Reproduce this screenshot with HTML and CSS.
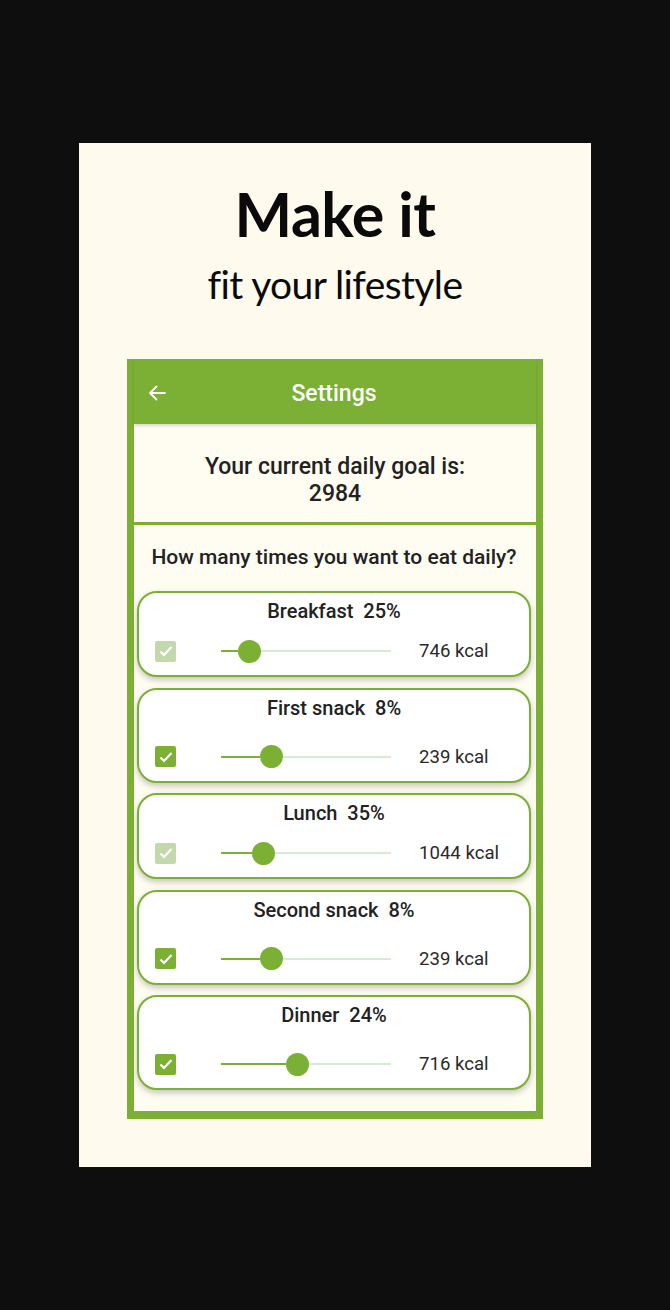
FILE: index.html
```html
<!DOCTYPE html>
<html>
<head>
<meta charset="utf-8">
<link rel="stylesheet" href="styles.css">
</head>
<body>
<div class="panel">
  <h1 class="headline">Make it</h1>
  <p class="subline">fit your lifestyle</p>
  <div class="phone">
    <div class="appbar">
      <svg class="back" width="18" height="16" viewBox="0 0 18 16"><path d="M17 8H2M8.5 1.5L2 8l6.5 6.5" fill="none" stroke="#fff" stroke-width="1.8" stroke-linecap="round" stroke-linejoin="round"/></svg>
      <span class="appbar-title">Settings</span>
    </div>
    <div class="goal">
      <div>Your current daily goal is:</div>
      <div>2984</div>
    </div>
    <div class="meals">
      <div class="question">How many times you want to eat daily?</div>

      <div class="card">
        <div class="card-title">Breakfast&nbsp; 25%</div>
        <div class="row">
          <span class="check faded"><svg width="14" height="12" viewBox="0 0 14 12"><path d="M1.5 6.5l3.5 3.5 7.5-8" fill="none" stroke="#fff" stroke-width="2.2"/></svg></span>
          <div class="slider"><span class="fill" style="width:17px"></span><span class="thumb"></span><span class="rest"></span></div>
          <span class="kcal">746 kcal</span>
        </div>
      </div>

      <div class="card tall">
        <div class="card-title">First snack&nbsp; 8%</div>
        <div class="row">
          <span class="check"><svg width="14" height="12" viewBox="0 0 14 12"><path d="M1.5 6.5l3.5 3.5 7.5-8" fill="none" stroke="#fff" stroke-width="2.2"/></svg></span>
          <div class="slider"><span class="fill" style="width:39px"></span><span class="thumb"></span><span class="rest"></span></div>
          <span class="kcal">239 kcal</span>
        </div>
      </div>

      <div class="card">
        <div class="card-title">Lunch&nbsp; 35%</div>
        <div class="row">
          <span class="check faded"><svg width="14" height="12" viewBox="0 0 14 12"><path d="M1.5 6.5l3.5 3.5 7.5-8" fill="none" stroke="#fff" stroke-width="2.2"/></svg></span>
          <div class="slider"><span class="fill" style="width:31px"></span><span class="thumb"></span><span class="rest"></span></div>
          <span class="kcal">1044 kcal</span>
        </div>
      </div>

      <div class="card tall">
        <div class="card-title">Second snack&nbsp; 8%</div>
        <div class="row">
          <span class="check"><svg width="14" height="12" viewBox="0 0 14 12"><path d="M1.5 6.5l3.5 3.5 7.5-8" fill="none" stroke="#fff" stroke-width="2.2"/></svg></span>
          <div class="slider"><span class="fill" style="width:39px"></span><span class="thumb"></span><span class="rest"></span></div>
          <span class="kcal">239 kcal</span>
        </div>
      </div>

      <div class="card tall">
        <div class="card-title">Dinner&nbsp; 24%</div>
        <div class="row">
          <span class="check"><svg width="14" height="12" viewBox="0 0 14 12"><path d="M1.5 6.5l3.5 3.5 7.5-8" fill="none" stroke="#fff" stroke-width="2.2"/></svg></span>
          <div class="slider"><span class="fill" style="width:65px"></span><span class="thumb"></span><span class="rest"></span></div>
          <span class="kcal">716 kcal</span>
        </div>
      </div>
    </div>
  </div>
</div>
</body>
</html>
```
FILE: styles.css
```css
* { box-sizing: border-box; }
html, body { margin: 0; padding: 0; }
body {
  background: #0e0e0e;
  width: 670px;
  height: 1310px;
  padding: 143px 0 0 79px;
  font-family: Roboto, "Noto Sans", sans-serif;
}
.panel {
  width: 512px;
  height: 1024px;
  background: #fffaee;
  display: flex;
  flex-direction: column;
  align-items: center;
  padding-top: 36px;
}
.headline {
  margin: 0;
  font-family: Lato, "Open Sans", sans-serif;
  font-weight: 700;
  font-size: 61px;
  line-height: 70px;
  color: #0a0a0a;
  letter-spacing: -0.5px;
}
.subline {
  margin: 6px 0 0 0;
  font-family: Lato, "Open Sans", sans-serif;
  font-weight: 400;
  font-size: 39px;
  line-height: 58px;
  color: #0a0a0a;
  letter-spacing: -0.6px;
}
.phone {
  margin-top: 46px;
  width: 416px;
  border: 7px solid #7bb035;
  border-top: 0;
  border-bottom-width: 8px;
  background: #fffcf1;
  display: flex;
  flex-direction: column;
}
.appbar {
  height: 65px;
  background: #7bb035;
  position: relative;
  display: flex;
  align-items: center;
  justify-content: center;
  box-shadow: 0 2px 3px rgba(0,0,0,0.15);
  z-index: 1;
}
.back {
  position: absolute;
  left: 14px;
  top: 26px;
}
.appbar-title {
  color: #fff;
  font-size: 23px;
  font-weight: 500;
  margin-left: -2px;
  padding-top: 4px;
}
.goal {
  height: 101px;
  border-bottom: 3px solid #7bb035;
  display: flex;
  flex-direction: column;
  align-items: center;
  justify-content: center;
  font-size: 23px;
  font-weight: 500;
  line-height: 27px;
  color: #222;
  padding-top: 14px;
}
.meals {
  display: flex;
  flex-direction: column;
  gap: 10.5px;
  padding: 0 5px 21px 3px;
}
.question {
  text-align: center;
  font-size: 21px;
  font-weight: 500;
  color: #222;
  line-height: 24px;
  padding-top: 20px;
  margin-bottom: 11.5px;
}
.card {
  background: #fff;
  border: 2px solid #7bb035;
  border-radius: 20px;
  box-shadow: 0 3px 6px rgba(0,0,0,0.22);
  padding: 6px 0 12px 0;
}
.card-title {
  text-align: center;
  font-size: 20px;
  font-weight: 500;
  color: #222;
  line-height: 24px;
}
.row {
  margin-top: 16px;
  height: 24px;
  display: flex;
  align-items: center;
  padding-left: 16px;
}
.tall .row { margin-top: 25px; }
.check {
  width: 21px;
  height: 21px;
  border-radius: 2px;
  background: #7bb035;
  display: flex;
  align-items: center;
  justify-content: center;
}
.check.faded { background: #c3d9ad; }
.slider {
  margin-left: 45px;
  width: 170px;
  display: flex;
  align-items: center;
}
.fill {
  height: 2px;
  background: #7bb035;
}
.thumb {
  width: 23px;
  height: 23px;
  border-radius: 50%;
  background: #7bb035;
  flex: none;
}
.rest {
  flex: 1;
  height: 2px;
  background: #d5ebd3;
}
.kcal {
  margin-left: 28px;
  font-size: 18.6px;
  color: #2a2a2a;
}
```
